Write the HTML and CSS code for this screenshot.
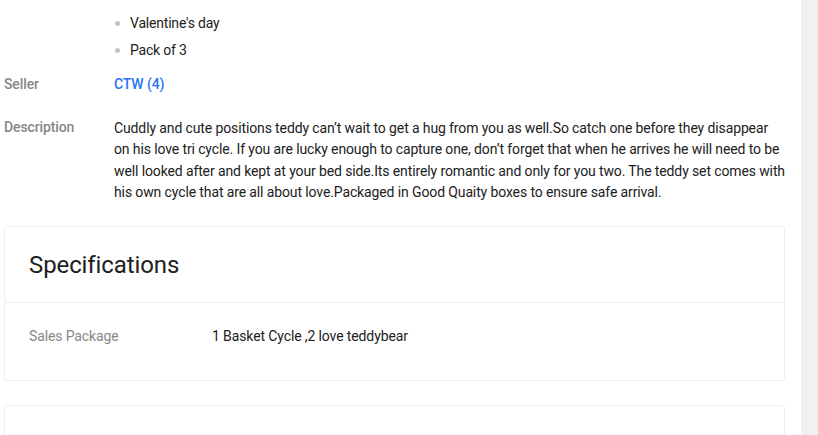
FILE: index.html
```html
<!DOCTYPE html>
<html>
<head>
<meta charset="utf-8">
<link rel="stylesheet" href="styles.css">
</head>
<body>
<div class="page">
  <main class="main">
    <div class="row highlights">
      <div class="label"></div>
      <ul class="bullets">
        <li class="first">Ideal For: Girls, Boys, Kids, Baby Girls, Women and anyone who is in love, especially on any<span class="info"></span></li>
        <li>Valentine's day</li>
        <li>Pack of 3</li>
      </ul>
    </div>
    <div class="row seller">
      <div class="label">Seller</div>
      <a class="seller-link" href="#">CTW (4)</a>
    </div>
    <div class="row description">
      <div class="label">Description</div>
      <p class="desc-text">Cuddly and cute positions teddy can’t wait to get a hug from you as well.So catch one before they disappear on his love tri cycle. If you are lucky enough to capture one, don’t forget that when he arrives he will need to be well looked after and kept at your bed side.Its entirely romantic and only for you two. The teddy set comes with his own cycle that are all about love.Packaged in Good Quaity boxes to ensure safe arrival.</p>
    </div>
    <section class="card">
      <h2 class="card-title">Specifications</h2>
      <div class="spec-row">
        <div class="spec-label">Sales Package</div>
        <div class="spec-value">1 Basket Cycle ,2 love teddybear</div>
      </div>
    </section>
    <section class="card card-next"></section>
  </main>
  <div class="scrollbar"></div>
</div>
</body>
</html>
```

FILE: styles.css
```css
html, body {
  margin: 0;
  padding: 0;
  background: #fff;
  overflow: hidden;
}
body {
  font-family: Roboto, "Liberation Sans", Arial, sans-serif;
  font-size: 14px;
  color: #212121;
  letter-spacing: -0.12px;
}
.page {
  display: flex;
  width: 818px;
  height: 435px;
  overflow: hidden;
}
.main {
  width: 801px;
  box-sizing: border-box;
  padding: 0 16px 0 4px;
}
.scrollbar {
  width: 17px;
  background: #f1f1f1;
  flex-shrink: 0;
}
.row {
  display: flex;
}
.label {
  width: 110px;
  flex-shrink: 0;
  color: #878787;
  font-weight: 500;
  line-height: 20px;
}
.highlights {
  margin-top: -21px;
}
.bullets {
  list-style: none;
  margin: 0;
  padding: 0;
}
.bullets li {
  position: relative;
  line-height: 27px;
  padding-left: 16px;
  white-space: nowrap;
  letter-spacing: -0.2px;
}
.bullets li.first {
  margin-bottom: 4px;
}
.bullets li::before {
  content: "";
  position: absolute;
  left: 1px;
  top: 11px;
  width: 5px;
  height: 5px;
  border-radius: 50%;
  background: #c2c2c2;
}
.info {
  display: inline-block;
  width: 14px;
  height: 14px;
  box-sizing: border-box;
  border: 1px solid #c2c2c2;
  border-radius: 50%;
  margin-left: 6px;
  vertical-align: -3px;
}
.seller {
  margin-top: 10px;
}
.seller-link {
  color: #2874f0;
  font-weight: 500;
  text-decoration: none;
  line-height: 20px;
}
.description {
  margin-top: 23px;
}
.description .label {
  line-height: 20px;
}
.desc-text {
  margin: 1px 0 0;
  flex: 1;
  line-height: 21.33px;
  letter-spacing: -0.12px;
}
.card {
  border: 1px solid #f0f0f0;
  border-radius: 2px;
  margin-top: 23px;
}
.card-title {
  margin: 0;
  padding: 24px 24px 23px;
  font-size: 24px;
  font-weight: 400;
  line-height: 28px;
  border-bottom: 1px solid #f0f0f0;
  letter-spacing: -0.1px;
}
.spec-row {
  display: flex;
  padding: 23px 24px 34px;
  line-height: 20px;
}
.spec-label {
  width: 183px;
  flex-shrink: 0;
  color: #878787;
}
.spec-value {
  color: #212121;
}
.card-next {
  margin-top: 24px;
  height: 100px;
}
```
